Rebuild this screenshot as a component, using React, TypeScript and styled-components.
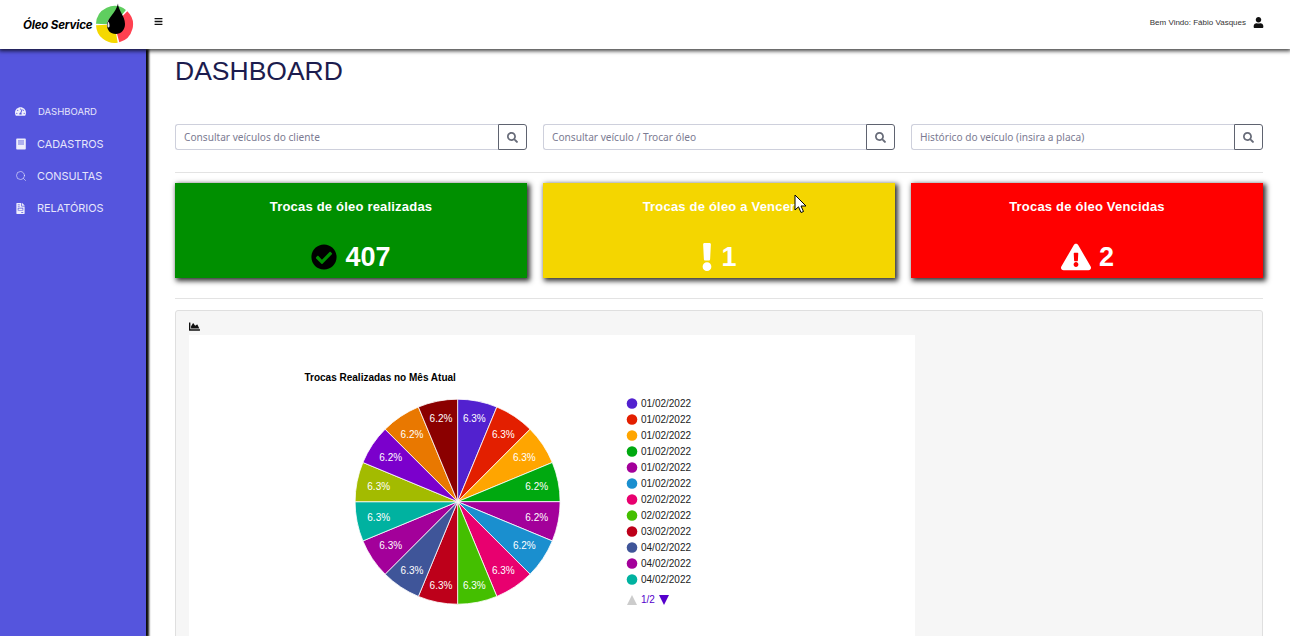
import React from "react";
import styled, { createGlobalStyle } from "styled-components";
import { FaBars, FaUser, FaTachometerAlt, FaFileInvoice, FaSearch, FaCheckCircle, FaExclamation, FaExclamationTriangle, FaChartArea } from "react-icons/fa";
import { Search } from "lucide-react";

const Global = createGlobalStyle`
  html, body { margin: 0; padding: 0; height: 636px; overflow: hidden; background: #fff; }
  * { box-sizing: border-box; }
`;

const Page = styled.div`
  position: relative;
  width: 1290px;
  height: 636px;
  overflow: hidden;
  display: flex;
  flex-direction: column;
  font-family: "Liberation Sans", Arial, sans-serif;
`;

const Header = styled.header`
  position: relative;
  z-index: 3;
  flex: 0 0 49px;
  min-height: 0;
  display: flex;
  align-items: center;
  background: #fff;
  box-shadow: 0 1px 4px 1px rgba(0, 0, 0, 0.75);
  padding: 0 26px 5px 23px;
`;

const Brand = styled.div`
  display: flex;
  align-items: center;
  width: 131px;
`;

const BrandName = styled.span`
  font-family: Inter, sans-serif;
  font-style: italic;
  font-weight: 700;
  font-size: 11.6px;
  letter-spacing: -0.2px;
  color: #000;
  white-space: nowrap;
  width: 72px;
  margin-top: 5px;
`;

const LogoMark = styled.svg`
  flex: none;
  margin-top: 3px;
`;

const Burger = styled.span`
  display: flex;
  font-size: 9px;
  color: #111;
  margin-top: -1px;
`;

const Greeting = styled.div`
  margin-left: auto;
  display: flex;
  align-items: center;
  gap: 7px;
  font-size: 8px;
  color: #333;
  padding-top: 1px;
  svg { font-size: 11px; color: #111; }
`;

const Body = styled.div`
  flex: 1;
  display: flex;
  min-height: 0;
`;

const Sidebar = styled.nav`
  position: relative;
  z-index: 2;
  flex: 0 0 146px;
  background: #5555dd;
  box-shadow: 2px 0 2px 0.5px rgba(0, 0, 0, 0.95);
  padding-top: 47px;
`;

const NavItem = styled.div<{ $small?: boolean }>`
  height: 32px;
  display: flex;
  align-items: center;
  padding-left: 15px;
  padding-bottom: ${(p) => (p.$small ? "1px" : "0")};
  color: #e6e6fb;
  font-family: Inter, sans-serif;
  font-size: ${(p) => (p.$small ? "9.5px" : "10.9px")};
  svg { flex: 0 0 auto; color: #eeeefc; }
`;

const NavIcon = styled.span<{ $gap: number }>`
  display: flex;
  justify-content: center;
  width: 11px;
  margin-right: ${(p) => p.$gap}px;
`;

const Main = styled.main`
  flex: 1;
  min-width: 0;
  padding: 2px 27px 0 29px;
`;

const Title = styled.h1`
  margin: 0;
  height: 73px;
  font-weight: 400;
  font-size: 26.5px;
  line-height: 41px;
  color: #1c1c4e;
`;

const Grid = styled.div`
  display: grid;
  grid-template-columns: repeat(3, 352px);
  column-gap: 16px;
`;

const SearchBox = styled.div`
  display: flex;
  height: 26px;
`;

const SearchField = styled.div`
  flex: 1;
  display: flex;
  align-items: center;
  border: 1px solid #ced0dc;
  border-right: 0;
  border-radius: 3px 0 0 3px;
  padding-left: 8px;
  font-family: "Noto Sans", sans-serif;
  font-size: 10.15px;
  color: #7b7b92;
  white-space: nowrap;
`;

const SearchButton = styled.div`
  flex: 0 0 29px;
  display: flex;
  align-items: center;
  justify-content: center;
  border: 1px solid #5f6370;
  border-radius: 0 3px 3px 0;
  color: #676b78;
  font-size: 11px;
`;

const Divider = styled.hr<{ $top: number; $bottom: number }>`
  border: 0;
  border-top: 1px solid #e3e3e3;
  margin: ${(p) => p.$top}px 0 ${(p) => p.$bottom}px;
`;

const Card = styled.div<{ $bg: string }>`
  height: 95px;
  background: ${(p) => p.$bg};
  box-shadow: 2px 2px 5px 1px #333;
  color: #fff;
  display: flex;
  flex-direction: column;
  align-items: center;
  font-weight: 700;
`;

const CardTitle = styled.div`
  margin-top: 16px;
  font-size: 13px;
  line-height: 15px;
  letter-spacing: 0.2px;
`;

const CardValue = styled.div<{ $gap: number; $pad?: number; $shift?: number }>`
  margin-top: 28px;
  display: flex;
  align-items: center;
  gap: ${(p) => p.$gap}px;
  padding-right: ${(p) => p.$pad ?? 0}px;
  padding-left: ${(p) => p.$shift ?? 0}px;
  font-size: 27px;
  line-height: 30px;
`;

const Panel = styled.section`
  border: 1px solid #dfdfdf;
  border-radius: 3px;
  background: #f6f6f6;
  padding: 10px 13px 0;
  height: 400px;
`;

const PanelIcon = styled.div`
  display: flex;
  height: 14px;
  font-size: 11px;
  color: #111;
`;

const ChartSvg = styled.svg`
  display: block;
  background: #fff;
  font-family: "Liberation Sans", Arial, sans-serif;
  font-size: 10px;
`;

const Cursor = styled.svg`
  position: absolute;
  left: 794px;
  top: 194px;
`;

const COLORS = ["#5221cf", "#e31f00", "#ffa500", "#00a910", "#a3009a", "#1a8fcf", "#e8006f", "#44bf00", "#bd001a", "#3f5599", "#a3009a", "#00b2a0", "#a3bb00", "#7b00cc", "#e97800", "#8b0000"];
const LABELS: [string, number, number][] = [
  ["6.3%", 474.3, 418.3], ["6.3%", 503.3, 434], ["6.3%", 524.3, 457], ["6.2%", 536.7, 486.3],
  ["6.2%", 536.7, 517], ["6.2%", 524.3, 545.7], ["6.3%", 503.3, 570], ["6.3%", 474.3, 585],
  ["6.3%", 441, 585], ["6.3%", 412, 570], ["6.3%", 390.7, 545.7], ["6.3%", 378.7, 517],
  ["6.3%", 378.7, 486.3], ["6.2%", 390.7, 457], ["6.2%", 412, 434], ["6.2%", 441, 418.3],
];
const DATES = ["01/02/2022", "01/02/2022", "01/02/2022", "01/02/2022", "01/02/2022", "01/02/2022", "02/02/2022", "02/02/2022", "03/02/2022", "04/02/2022", "04/02/2022", "04/02/2022"];

const CX = 457.6, CY = 501.7, R = 102.5;
const slicePath = (i: number) => {
  const a0 = (i * Math.PI) / 8, a1 = ((i + 1) * Math.PI) / 8;
  const pt = (a: number) => `${(CX + R * Math.sin(a)).toFixed(2)} ${(CY - R * Math.cos(a)).toFixed(2)}`;
  return `M${CX} ${CY}L${pt(a0)}A${R} ${R} 0 0 1 ${pt(a1)}Z`;
};

const Logo = () => (
  <LogoMark width="40" height="44" viewBox="0 0 40 44">
    <g fill="none" strokeWidth="11">
      <path d="M6.5 22.05A13 13 0 0 1 27.5 12.26" stroke="#5fce5f" />
      <path d="M28.5 13.15A13 13 0 0 1 22.9 35.06" stroke="#ff4150" />
      <path d="M21.76 35.3A13 13 0 0 1 6.51 22.95" stroke="#f5d800" />
    </g>
    <path d="M23 1.5C23 8 30 14 30 22C30 28 26 32 21 32C15 32 12 28 12 23C12 16 21 11 23 1.5Z" fill="#000" />
    <path d="M13.5 19.5C12.2 22 12 25.5 13.5 25.5C15 25.5 14.8 22 13.5 19.5Z" fill="#e8e8e8" />
  </LogoMark>
);

const RecordIcon = () => (
  <svg width="10" height="12" viewBox="0 0 10 12">
    <path fillRule="evenodd" d="M1 .5H9A.8.8 0 0 1 9.8 1.3V10.7A.8.8 0 0 1 9 11.5H1A.8.8 0 0 1 .2 10.7V1.3A.8.8 0 0 1 1 .5ZM2 2.5V7H8V2.5Z" fill="currentColor" />
    <path d="M2 2.5H8V7H2Z" fill="#aeb0ee" />
  </svg>
);

export default function App() {
  return (
    <Page>
      <Global />
      <Header>
        <Brand>
          <BrandName>Óleo Service</BrandName>
          <Logo />
        </Brand>
        <Burger><FaBars /></Burger>
        <Greeting>Bem Vindo: Fábio Vasques <FaUser /></Greeting>
      </Header>
      <Body>
        <Sidebar>
          <NavItem $small><NavIcon $gap={12}><FaTachometerAlt size={11} /></NavIcon>DASHBOARD</NavItem>
          <NavItem><NavIcon $gap={11}><RecordIcon /></NavIcon>CADASTROS</NavItem>
          <NavItem><NavIcon $gap={11}><Search size={12} strokeWidth={1.2} /></NavIcon>CONSULTAS</NavItem>
          <NavItem><NavIcon $gap={11}><FaFileInvoice size={11} /></NavIcon>RELATÓRIOS</NavItem>
        </Sidebar>
        <Main>
          <Title>DASHBOARD</Title>
          <Grid>
            {["Consultar veículos do cliente", "Consultar veículo / Trocar óleo", "Histórico do veículo (insira a placa)"].map((t) => (
              <SearchBox key={t}>
                <SearchField>{t}</SearchField>
                <SearchButton><FaSearch /></SearchButton>
              </SearchBox>
            ))}
          </Grid>
          <Divider $top={22} $bottom={10} />
          <Grid>
            <Card $bg="#008f00">
              <CardTitle>Trocas de óleo realizadas</CardTitle>
              <CardValue $gap={8}><FaCheckCircle size={26} color="#000" />407</CardValue>
            </Card>
            <Card $bg="#f4d600">
              <CardTitle>Trocas de óleo a Vencer</CardTitle>
              <CardValue $gap={-2} $pad={8}><FaExclamation size={28} />1</CardValue>
            </Card>
            <Card $bg="#ff0000">
              <CardTitle>Trocas de óleo Vencidas</CardTitle>
              <CardValue $gap={8} $shift={1}><FaExclamationTriangle size={30} />2</CardValue>
            </Card>
          </Grid>
          <Divider $top={20} $bottom={11} />
          <Panel>
            <PanelIcon><FaChartArea /></PanelIcon>
            <ChartSvg width="726" height="340" viewBox="189 335 726 340">
              <text x="304.5" y="381" fontWeight="700" fill="#000">Trocas Realizadas no Mês Atual</text>
              {COLORS.map((c, i) => (
                <path key={i} d={slicePath(i)} fill={c} stroke="#fff" strokeWidth="0.8" />
              ))}
              {LABELS.map(([t, x, y], i) => (
                <text key={i} x={x} y={y + 3.5} textAnchor="middle" fill="#fff">{t}</text>
              ))}
              {DATES.map((d, i) => (
                <g key={i}>
                  <circle cx="632" cy={403.5 + i * 16} r="5.3" fill={COLORS[i]} />
                  <text x="641" y={407 + i * 16} fill="#222">{d}</text>
                </g>
              ))}
              <path d="M627 605L637 605L632 595Z" fill="#ccc" />
              <text x="641" y="603" fill="#5500cc">1/2</text>
              <path d="M659 595L669 595L664 605Z" fill="#5500cc" />
            </ChartSvg>
          </Panel>
        </Main>
      </Body>
      <Cursor width="14" height="21" viewBox="0 0 14 21">
        <path d="M1 1L1 16L4.5 12.8L7 18.5L9.5 17.5L7 12L12 12Z" fill="#fff" stroke="#000" strokeWidth="1" />
      </Cursor>
    </Page>
  );
}
